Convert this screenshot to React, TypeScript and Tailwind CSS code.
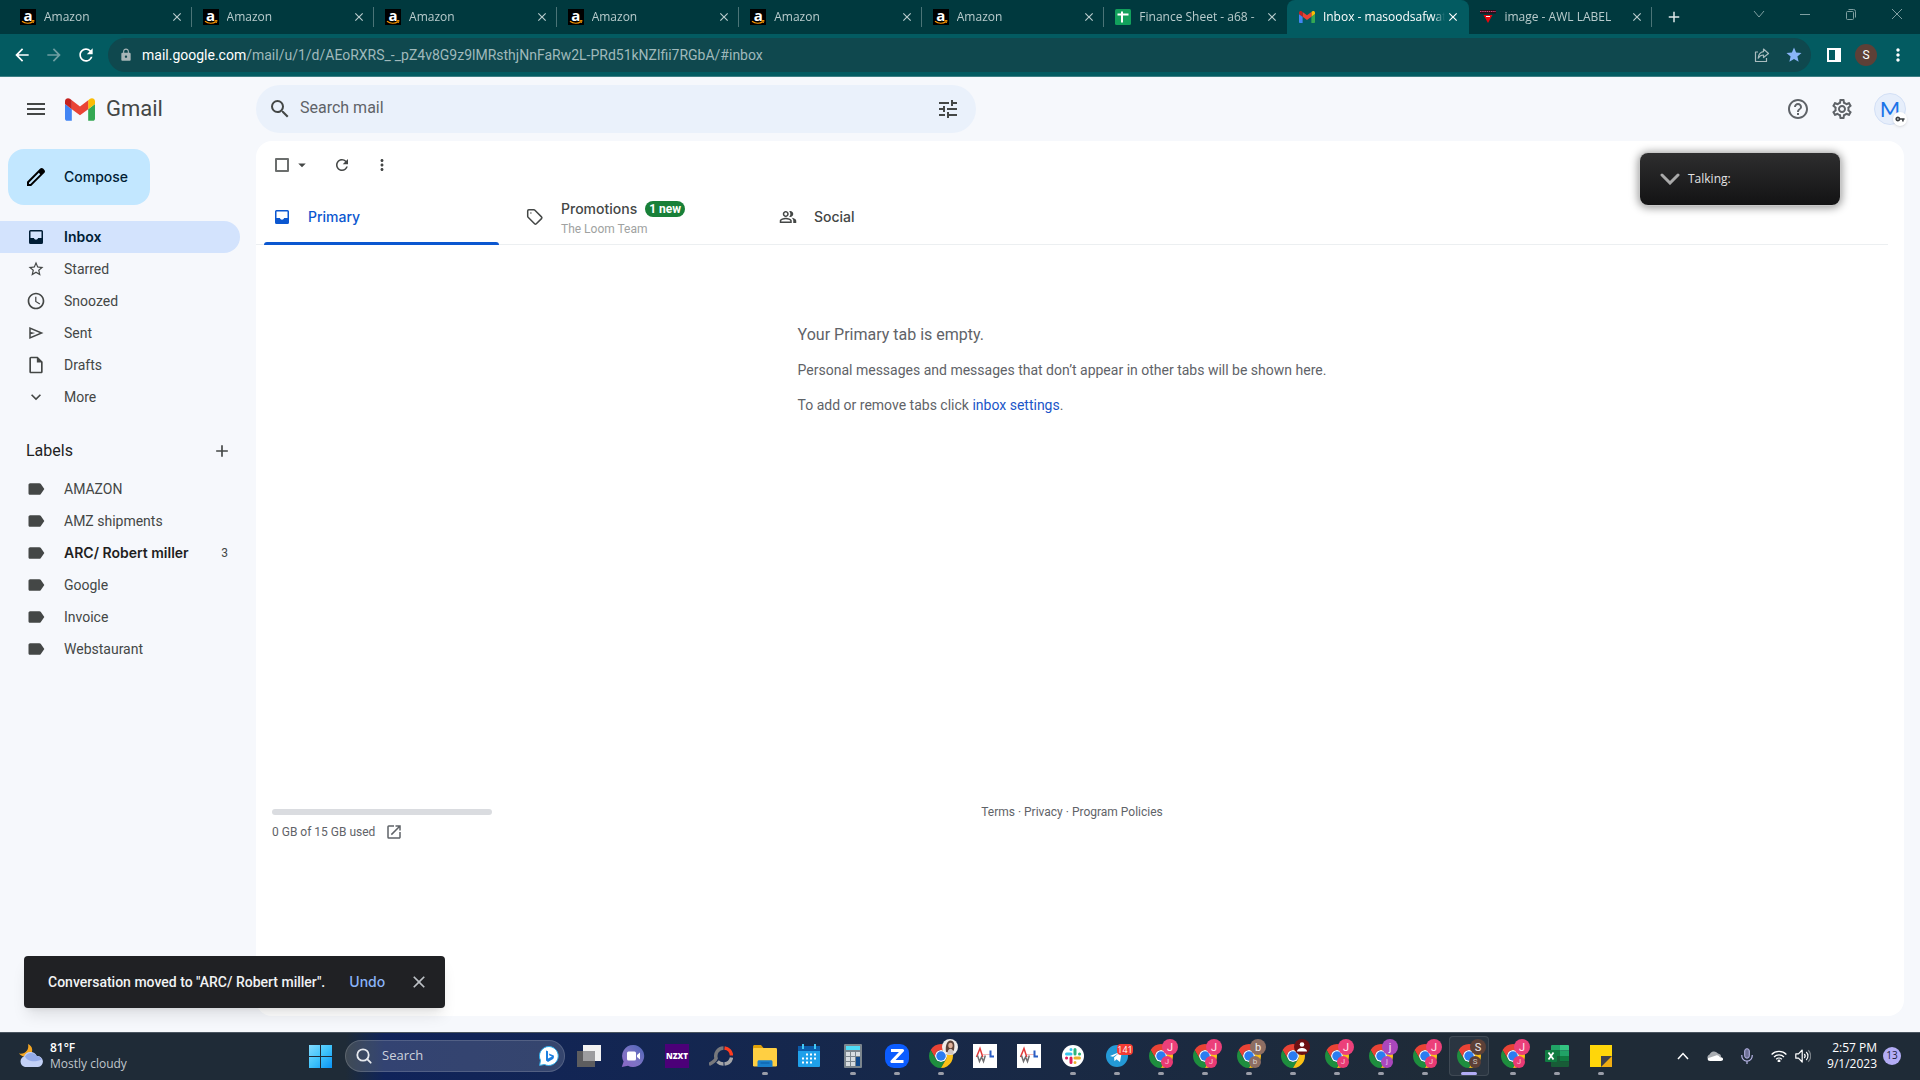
import React from 'react';
import {
  MdAdd,
  MdArrowBack,
  MdArrowDropDown,
  MdArrowForward,
  MdClose,
  MdExpandMore,
  MdHelpOutline,
  MdLabel,
  MdLock,
  MdMenu,
  MdMoreVert,
  MdOpenInNew,
  MdOutlineInsertDriveFile,
  MdOutlinePeopleAlt,
  MdOutlineSettings,
  MdRefresh,
  MdSchedule,
  MdSearch,
  MdStar,
  MdStarBorder,
  MdTune,
  MdVpnKey,
} from 'react-icons/md';

/* ---------- drawings ---------- */

function GmailLogo({ className }: { className?: string }) {
  return (
    <svg viewBox="52 42 88 66" className={className} aria-hidden="true">
      <path fill="#4285f4" d="M58 108h14V74L52 59v43c0 3.32 2.69 6 6 6" />
      <path fill="#34a853" d="M120 108h14c3.32 0 6-2.69 6-6V59l-20 15" />
      <path fill="#fbbc04" d="M120 48v26l20-15v-8c0-7.42-8.47-11.65-14.4-7.2" />
      <path fill="#ea4335" d="M72 74V48l24 18 24-18v26L96 92" />
      <path fill="#c5221f" d="M52 51v8l20 15V48l-5.6-4.2c-5.94-4.45-14.4-.22-14.4 7.2" />
    </svg>
  );
}

function AmazonIcon() {
  return (
    <span className="relative flex h-4 w-4 shrink-0 items-center justify-center bg-black font-['Open_Sans',sans-serif] text-[15px] leading-[10px] font-bold text-white">
      <span className="pb-1">a</span>
      <svg viewBox="0 0 16 16" className="absolute inset-0 h-4 w-4" aria-hidden="true">
        <path d="M2 12.2c3.4 2.5 8 2.500 11 .4" fill="none" stroke="#f79400" strokeWidth="1.300" />
        <path d="M11.500 11.700l2.600-.2-.8 2.400" fill="none" stroke="#f79400" strokeWidth="1" />
      </svg>
    </span>
  );
}

function SheetsIcon() {
  return (
    <svg viewBox="0 0 16 16" className="h-4 w-4 shrink-0" aria-hidden="true">
      <rect width="16" height="16" rx="1.500" fill="#12a05c" />
      <path d="M2.500 5.500h11M7 2.500v11" stroke="#fff" strokeWidth="2" />
    </svg>
  );
}

function AwlIcon() {
  return (
    <svg viewBox="0 0 16 16" className="h-4 w-4 shrink-0" aria-hidden="true">
      <rect x="0" y="1" width="16" height="3.500" fill="#2a0d16" />
      <path d="M0 2.500h16" stroke="#d0477a" strokeWidth="1.200" strokeDasharray="1.500 .7" />
      <path d="M3.500 6h9L8 14z" fill="#e8050c" />
      <path d="M6 7.500h4" stroke="#fff" strokeWidth="1" />
    </svg>
  );
}

function InboxIcon({ className }: { className?: string }) {
  return (
    <svg viewBox="0 0 14 14" className={className} fill="currentColor" aria-hidden="true">
      <path
        fillRule="evenodd"
        d="M1.500 0h11A1.500 1.500 0 0 1 14 1.500v11a1.500 1.500 0 0 1-1.500 1.500h-11A1.500 1.500 0 0 1 0 12.500v-11A1.500 1.500 0 0 1 1.500 0zM1.500 1.500V8h3.400c.4 1.100 1.100 1.700 2.100 1.700S8.700 9.100 9.100 8h3.400V1.500z"
      />
    </svg>
  );
}

function SendIcon() {
  return (
    <svg viewBox="0 0 24 24" className="h-[18px] w-[18px]" fill="currentColor" aria-hidden="true">
      <path d="M3 20V4l19 8-19 8zm2-3l11.850-5L5 7v3.500l6 1.500-6 1.500V17z" />
    </svg>
  );
}

function PencilIcon() {
  return (
    <svg viewBox="0 0 24 24" className="h-6 w-6" fill="currentColor" aria-hidden="true">
      <path d="M20.410 4.940l-1.350-1.350c-.78-.78-2.050-.78-2.830 0L3 16.820V21h4.180L20.410 7.770c.79-.78.79-2.050 0-2.830zm-14 14.120L5 19v-1.360l9.820-9.820 1.410 1.410-9.820 9.830z" />
    </svg>
  );
}

function TagIcon() {
  return (
    <svg viewBox="0 0 18 18" className="h-[18px] w-[18px]" fill="none" stroke="currentColor" strokeWidth="1.500" aria-hidden="true">
      <path d="M1.700 2.900v5.300c0 .4.1.7.4 1l6.500 6.600c.5.500 1.200.5 1.700 0l5.200-5.200c.5-.5.500-1.200 0-1.700L8.900 2.200c-.3-.3-.6-.4-1-.4H2.800c-.6 0-1.100.5-1.100 1.100z" />
      <circle cx="4.900" cy="5" r=".7" fill="currentColor" stroke="none" />
    </svg>
  );
}

function ShareIcon() {
  return (
    <svg viewBox="0 0 16 16" className="h-4 w-4" fill="none" stroke="currentColor" strokeWidth="1.200" strokeLinejoin="round" aria-hidden="true">
      <path d="M4 5H1.500v9.500h11V11" />
      <path d="M9.500 2l5 4.500-5 4V8C7 8 5.500 9 4.200 11.200 4.500 7.500 6.500 5 9.500 4.600z" />
    </svg>
  );
}

function ChromeIcon() {
  return (
    <svg viewBox="0 0 48 48" className="h-6 w-6" aria-hidden="true">
      <circle cx="24" cy="24" r="12" fill="#fff" />
      <path fill="#ea4335" d="M24 12h20.780a24 24 0 0 0-41.560 0L13.610 30A12 12 0 0 1 24 12z" />
      <path fill="#1e8e3e" d="M13.610 30L3.220 12A24 24 0 0 0 24 48l10.390-18a12 12 0 0 1-20.780 0z" />
      <path fill="#fbc116" d="M34.390 30L24 48a24 24 0 0 0 20.780-36H24a12 12 0 0 1 10.390 18z" />
      <circle cx="24" cy="24" r="9.500" fill="#2b7cf0" />
    </svg>
  );
}

function ChromeProfile({ letter, big, small }: { letter: string; big: string; small: string }) {
  return (
    <span className="relative block h-6 w-6 font-['Roboto',sans-serif]">
      <ChromeIcon />
      <span className={`absolute -top-[5px] -right-[5px] flex h-4 w-4 items-center justify-center rounded-full text-[11px] leading-none text-white/90 ${big}`}>
        {letter}
      </span>
      <span className={`absolute right-0 bottom-0 flex h-3 w-3 items-center justify-center rounded-full text-[8px] leading-none text-white/70 ${small}`}>
        {letter}
      </span>
    </span>
  );
}

function TaskViewIcon() {
  return (
    <svg viewBox="0 0 24 24" className="h-6 w-6" aria-hidden="true">
      <rect x="6" y="1" width="18" height="16" fill="#f2f2f2" />
      <rect x="0" y="7" width="18" height="16" fill="#5d5d5f" />
      <rect x="6" y="7" width="12" height="10" fill="#9d9d9f" />
    </svg>
  );
}

function ChatIcon() {
  return (
    <svg viewBox="0 0 24 24" className="h-6 w-6" aria-hidden="true">
      <defs>
        <linearGradient id="chat" x1="1" y1="0" x2="0" y2="1">
          <stop offset="0" stopColor="#4a63b8" />
          <stop offset=".55" stopColor="#7d74c4" />
          <stop offset="1" stopColor="#8b67c6" />
        </linearGradient>
      </defs>
      <path d="M12.500 1A11 11 0 1 1 7 21.700L.8 23l1.800-5.600A11 11 0 0 1 12.500 1z" fill="url(#chat)" />
      <rect x="6" y="7.500" width="9" height="9" rx="1.500" fill="#fff" />
      <path d="M16 11l3-2.500v7L16 13z" fill="#fff" />
    </svg>
  );
}

function NzxtIcon() {
  return (
    <span className="flex h-6 w-6 items-center justify-center bg-[#4c0078] font-['Open_Sans',sans-serif] text-[8px] leading-none font-extrabold text-white">
      NZXT
    </span>
  );
}

function RingIcon() {
  return (
    <svg viewBox="0 0 24 24" className="h-6 w-6" fill="none" aria-hidden="true">
      <path d="M14.500 4a8 8 0 0 0-7.400 10.300Q6 17.500 0 20.500" stroke="#77787c" strokeWidth="3.500" />
      <path d="M8.500 17.500A8 8 0 0 0 14.500 20" stroke="#a4a5a8" strokeWidth="3.500" />
      <path d="M15.500 4A8 8 0 0 1 22.500 11.500" stroke="#ff3c1f" strokeWidth="3.500" />
      <path d="M22.500 13.500A8 8 0 0 1 15.500 20" stroke="#a4a5a8" strokeWidth="3.500" />
    </svg>
  );
}

function FolderIcon() {
  return (
    <svg viewBox="0 0 24 24" className="h-6 w-6" aria-hidden="true">
      <path d="M0 2.500C0 1.700.7 1 1.500 1H8l2.500 3v4H0z" fill="#e0a008" />
      <rect y="4" width="24" height="18.500" rx="1.200" fill="#ffcf42" />
      <path d="M4.500 23v-5.200c0-.8.7-1.500 1.500-1.500h12c.8 0 1.500.7 1.500 1.500V23z" fill="#1a7fcb" />
      <path d="M7.500 19h9" stroke="#0a5ca4" strokeWidth="1" />
    </svg>
  );
}

function CalendarIcon() {
  return (
    <svg viewBox="0 0 24 24" className="h-6 w-6" aria-hidden="true">
      <rect x="1" y="2" width="22" height="21" rx="1" fill="#1fa0ea" />
      <path d="M1 2h22v5H1z" fill="#0b5cab" />
      <path d="M6 0v5M18 0v5" stroke="#43c8f5" strokeWidth="2" />
      <path d="M9 10.500h10M5 14.500h14M5 18.500h10" stroke="#fff" strokeWidth="2" strokeDasharray="2 2" />
    </svg>
  );
}

function CalculatorIcon() {
  return (
    <svg viewBox="0 0 24 24" className="h-6 w-6" aria-hidden="true">
      <rect x="3" width="18" height="24" rx="1" fill="#7b858d" />
      <rect x="5" y="2" width="14" height="4" fill="#4fdcf7" />
      <path d="M5 10h14M5 15h9M5 20h9" stroke="#d8dde1" strokeWidth="4" strokeDasharray="4 1" />
      <rect x="15" y="13" width="4" height="9" fill="#124a8c" />
    </svg>
  );
}

function ZoomAppIcon() {
  return (
    <svg viewBox="0 0 24 24" className="h-6 w-6" aria-hidden="true">
      <rect width="24" height="24" rx="9" fill="#0b5cff" />
      <path d="M6 6.500h11.500L7 17.500h11.500" fill="none" stroke="#fff" strokeWidth="3.200" strokeLinejoin="round" />
    </svg>
  );
}

function ChromePhoto() {
  return (
    <span className="relative block h-6 w-6">
      <ChromeIcon />
      <svg viewBox="0 0 16 16" className="absolute -top-[5px] -right-[5px] h-4 w-4" aria-hidden="true">
        <circle cx="8" cy="8" r="8" fill="#efecea" />
        <path d="M4 13C3 7 5 1.500 8.500 1.500S13 5 12 11l-2 3z" fill="#5c4238" />
        <ellipse cx="8.500" cy="6.500" rx="2.200" ry="2.800" fill="#dfb19a" />
        <path d="M5.500 15.500c0-4 1-5.500 3-5.500s3 1.500 3 5.500z" fill="#cfc6c2" />
      </svg>
    </span>
  );
}

function ChromeGuest() {
  return (
    <span className="relative block h-6 w-6">
      <ChromeIcon />
      <svg viewBox="0 0 16 16" className="absolute -top-[5px] -right-[5px] h-4 w-4" aria-hidden="true">
        <circle cx="8" cy="8" r="8" fill="#6d1013" />
        <circle cx="8" cy="5.500" r="2.300" fill="#fff" />
        <path d="M3 12.500c0-2.200 2.500-3.500 5-3.500s5 1.300 5 3.500z" fill="#fff" />
      </svg>
    </span>
  );
}

function AwlAppIcon() {
  return (
    <svg viewBox="0 0 24 24" className="h-6 w-6" aria-hidden="true">
      <rect width="24" height="24" fill="#fff" />
      <path d="M3.500 13L7 4.500 9.800 13" fill="none" stroke="#e23a3a" strokeWidth="1.500" />
      <path d="M4.500 11.500l2 6 2-4.500 2 4.500 1.800-6" fill="none" stroke="#6e6e70" strokeWidth="1.500" />
      <path d="M10 10.500h7" stroke="#f4b9b9" strokeWidth="1" />
      <path d="M17.500 6.500v6H21" fill="none" stroke="#2b5ec4" strokeWidth="2" />
    </svg>
  );
}

function SlackIcon() {
  return (
    <svg viewBox="0 0 24 24" className="h-6 w-6" aria-hidden="true">
      <circle cx="12" cy="12" r="11" fill="#fff" />
      <g strokeWidth="3" strokeLinecap="round">
        <path d="M5.500 10H10M10 5.500v.1" stroke="#36c5f0" />
        <path d="M14 5.500V10M18.500 10h.1" stroke="#2eb67d" />
        <path d="M14 14h4.500M14 18.500v.1" stroke="#ecb22e" />
        <path d="M10 14v4.500M5.500 14h.1" stroke="#e01e5a" />
      </g>
    </svg>
  );
}

function TelegramIcon() {
  return (
    <span className="relative block h-6 w-6">
      <svg viewBox="0 0 24 24" className="h-6 w-6" aria-hidden="true">
        <circle cx="12" cy="12" r="11" fill="#2499d6" />
        <path d="M5 12l12-5-2 11-3.500-2.800-2 2-.5-3.700 5-4.500-6 3.800z" fill="#fff" />
      </svg>
      <span className="absolute top-0 left-3 flex h-[11px] w-4 items-center justify-center rounded-sm bg-[#f23c34] font-['Open_Sans',sans-serif] text-[9px] leading-none text-white">
        141
      </span>
    </span>
  );
}

function ExcelIcon() {
  return (
    <svg viewBox="0 0 24 24" className="h-6 w-6" aria-hidden="true">
      <path d="M7 1h8.500v5.500H6V2a1 1 0 0 1 1-1z" fill="#21a366" />
      <path d="M15 1h8a1 1 0 0 1 1 1v4.500h-9z" fill="#33c481" />
      <path d="M6 6.500h9V12H6z" fill="#107c41" />
      <path d="M15 6.500h9V12h-9z" fill="#21a366" />
      <path d="M15 12h9v5.500h-9z" fill="#107c41" />
      <path d="M6 12h9v5.500h9V22a1 1 0 0 1-1 1H7a1 1 0 0 1-1-1z" fill="#185c37" />
      <rect y="6" width="12" height="12" rx="1" fill="#107c41" />
      <path d="M3.500 8.500l5 7M8.500 8.500l-5 7" stroke="#fff" strokeWidth="1.800" />
    </svg>
  );
}

function StickyIcon() {
  return (
    <svg viewBox="0 0 24 24" className="h-6 w-6" aria-hidden="true">
      <path d="M1 1h22v22H1z" fill="#ffd60a" />
      <path d="M12 23V12h11v11z" fill="#f0ad12" />
      <path d="M12 23V12h11z" fill="#3f4148" />
    </svg>
  );
}

function WeatherIcon() {
  return (
    <svg viewBox="0 0 24 24" className="h-6 w-6" aria-hidden="true">
      <path d="M9 0c5 2 5.500 8 2 11.500C8 14 3 13 0 9.500 6 10.500 10.500 6 9 0z" fill="#f5a623" />
      <path d="M6 23a5.500 5.500 0 0 1-1-10.500A7 7 0 0 1 17.800 12 5.500 5.500 0 0 1 19 23z" fill="#c3d1f6" />
      <path d="M6 12.500a7 7 0 0 1 11.800-.5c2 .2 4 1.500 5 3.500C15 19 8 17 6 12.500z" fill="#93aae8" />
    </svg>
  );
}

function BingIcon() {
  return (
    <svg viewBox="0 0 20 20" className="h-5 w-5" aria-hidden="true">
      <path d="M10 .5A9.500 9.500 0 1 1 5.500 18.500L.6 19.400l.9-5A9.500 9.500 0 0 1 10 .5z" fill="#fff" stroke="#29a8e6" strokeWidth="1" />
      <path d="M7 4.500l2 .8v7.200l4-2-2.500-1L9.800 7.500l5 1.900c.5 2-.2 3.300-1.600 4.200L9 16l-2-1.500z" fill="#1b7fe0" />
    </svg>
  );
}

/* ---------- browser frame ---------- */

const tabs = [
  { title: 'Amazon', icon: <AmazonIcon /> },
  { title: 'Amazon', icon: <AmazonIcon /> },
  { title: 'Amazon', icon: <AmazonIcon /> },
  { title: 'Amazon', icon: <AmazonIcon /> },
  { title: 'Amazon', icon: <AmazonIcon /> },
  { title: 'Amazon', icon: <AmazonIcon /> },
  { title: 'Finance Sheet - a68 -', icon: <SheetsIcon /> },
  { title: 'Inbox - masoodsafwat', icon: <GmailLogo className="h-4 w-4 shrink-0" />, active: true },
  { title: 'image - AWL LABEL', icon: <AwlIcon /> },
];

function TabStrip() {
  return (
    <div className="flex h-[34px] bg-[#00393e] pl-[9px] text-[#b9cccd]">
      <div className="grid min-w-0 flex-1 grid-cols-9">
        {tabs.map((t, i) => (
          <div
            key={i}
            className={
              t.active
                ? 'flex min-w-0 items-center rounded-t-lg bg-[#035b61] pr-2 pl-3 text-white'
                : 'flex min-w-0 items-center pl-[11px]'
            }
          >
            {t.icon}
            <a
              href="#tab"
              className="ml-2 min-w-0 flex-1 overflow-hidden text-xs whitespace-nowrap [mask-image:linear-gradient(to_right,#000_calc(100%-12px),transparent)]"
            >
              {t.title}
            </a>
            <button aria-label="Close tab" className="flex h-4 w-4 shrink-0 items-center justify-center">
              <MdClose className="h-3.5 w-3.5" />
            </button>
            {!t.active && <span className={i === 6 ? 'ml-1.5 w-px' : 'ml-1.5 h-5 w-px bg-[#4b7477]'} />}
          </div>
        ))}
      </div>
      <div className="flex w-[268px] shrink-0 items-center">
        <button aria-label="New tab" className="ml-3 flex h-5 w-5 items-center justify-center text-[#dfe9ea]">
          <MdAdd className="h-[18px] w-[18px]" />
        </button>
        <div className="ml-auto flex h-7 self-start text-[#7f9fa1]">
          <button aria-label="Search tabs" className="flex w-[46px] items-center justify-center">
            <svg viewBox="0 0 12 12" className="h-3 w-3" fill="none" stroke="currentColor">
              <path d="M1 3l5 6 5-6" />
            </svg>
          </button>
          <button aria-label="Minimize" className="flex w-[46px] items-center justify-center">
            <svg viewBox="0 0 12 12" className="h-3 w-3" fill="none" stroke="currentColor">
              <path d="M1 6.500h10" />
            </svg>
          </button>
          <button aria-label="Restore" className="flex w-[46px] items-center justify-center">
            <svg viewBox="0 0 12 12" className="h-3 w-3" fill="none" stroke="currentColor">
              <rect x="1.500" y="3.500" width="7" height="8" rx="1" />
              <path d="M3.500 1.500h5a2 2 0 0 1 2 2v6" />
            </svg>
          </button>
          <button aria-label="Close window" className="flex w-[46px] items-center justify-center">
            <svg viewBox="0 0 12 12" className="h-3 w-3" fill="none" stroke="currentColor">
              <path d="M1 1l10 10M11 1L1 11" />
            </svg>
          </button>
        </div>
      </div>
    </div>
  );
}

function AddressBar() {
  return (
    <div className="flex h-[43px] items-center border-b border-[#3d7f84] bg-[#035b61] pl-3 text-white">
      <button aria-label="Back" className="mr-3 flex w-5 justify-center">
        <MdArrowBack className="h-5 w-5" />
      </button>
      <button aria-label="Forward" className="mr-3 flex w-5 justify-center text-[#6f9fa2]">
        <MdArrowForward className="h-5 w-5" />
      </button>
      <button aria-label="Reload" className="mr-3 flex w-5 justify-center">
        <MdRefresh className="h-5 w-5" />
      </button>
      <div className="flex h-[34px] min-w-0 flex-1 items-center rounded-full bg-[#0f484e] pr-2 pl-[11px]">
        <MdLock className="h-3.5 w-3.5 text-[#a7b5b7]" />
        <a href="#inbox" className="ml-[9px] flex-1 truncate font-['Roboto',sans-serif] text-sm text-[#9fb9bb]">
          <span className="text-white">mail.google.com</span>
          /mail/u/1/d/AEoRXRS_-_pZ4v8G9z9lMRsthjNnFaRw2L-PRd51kNZlfii7RGbA/#inbox
        </a>
        <button aria-label="Share" className="mr-[15px] text-[#a9bcbe]">
          <ShareIcon />
        </button>
        <button aria-label="Bookmark" className="text-[#8ab4f8]">
          <MdStar className="h-[18px] w-[18px]" />
        </button>
      </div>
      <button aria-label="Side panel" className="ml-4 flex w-[14px]">
        <svg viewBox="0 0 14 14" className="h-3.5 w-3.5" aria-hidden="true">
          <path fill="#fff" fillRule="evenodd" d="M0 0h14v14H0zM2 2v10h6V2z" />
        </svg>
      </button>
      <button className="ml-[14px] flex h-[22px] w-[22px] items-center justify-center rounded-full bg-[#5d4037] font-['Roboto',sans-serif] text-xs">
        S
      </button>
      <button aria-label="Browser menu" className="mr-3 ml-[11px] flex w-5 justify-center">
        <MdMoreVert className="h-5 w-5" />
      </button>
    </div>
  );
}

/* ---------- mail ---------- */

function MailHeader() {
  return (
    <header className="flex h-16 items-center text-[#444746]">
      <div className="flex w-64 shrink-0 items-center pl-6">
        <button aria-label="Main menu">
          <MdMenu className="h-6 w-6" />
        </button>
        <GmailLogo className="ml-[17px] h-[23px] w-[30px]" />
        <span className="ml-[11px] text-[22px] leading-6">Gmail</span>
      </div>
      <div className="flex h-12 w-[720px] shrink items-center rounded-full bg-[#eaf1fb] pr-4 pl-3">
        <MdSearch className="h-6 w-6" />
        <input
          aria-label="Search mail"
          placeholder="Search mail"
          className="ml-2 min-w-0 flex-1 bg-transparent pb-0.5 text-base outline-none placeholder:text-[#5f6368]"
        />
        <button aria-label="Show search options">
          <MdTune className="h-6 w-6" />
        </button>
      </div>
      <div className="ml-auto flex items-center gap-5 pr-[14px] text-[#5f6368]">
        <button aria-label="Support">
          <MdHelpOutline className="h-6 w-6" />
        </button>
        <button aria-label="Settings">
          <MdOutlineSettings className="h-6 w-6" />
        </button>
        <button className="relative flex h-8 w-8 items-center justify-center rounded-full border border-[#d3e0f6] bg-[#e6eefb] font-['Lato',sans-serif] text-[22px] leading-none text-[#1a73e8]">
          M
          <span className="absolute -right-0.5 -bottom-0.5 flex h-3.5 w-3.5 items-center justify-center rounded-full bg-white shadow">
            <MdVpnKey className="h-2.5 w-2.5 text-[#3c4043]" />
          </span>
        </button>
      </div>
    </header>
  );
}

const folders = [
  { name: 'Starred', icon: <MdStarBorder className="h-[18px] w-[18px]" /> },
  { name: 'Snoozed', icon: <MdSchedule className="h-5 w-5" /> },
  { name: 'Sent', icon: <SendIcon /> },
  { name: 'Drafts', icon: <MdOutlineInsertDriveFile className="h-5 w-5" /> },
  { name: 'More', icon: <MdExpandMore className="h-5 w-5" /> },
];

const labels = ['AMAZON', 'AMZ shipments', 'ARC/ Robert miller', 'Google', 'Invoice', 'Webstaurant'];

function Sidebar() {
  return (
    <nav className="w-64 shrink-0 pt-2 text-sm text-[#444746]">
      <button className="ml-2 flex h-14 items-center rounded-2xl bg-[#c2e7ff] pr-[22px] pl-4 font-['Inter',sans-serif] font-medium text-[#001d35]">
        <span className="mr-4 text-black">
          <PencilIcon />
        </span>
        Compose
      </button>
      <a
        href="#inbox"
        className="mt-4 mr-4 flex h-8 items-center rounded-r-full bg-[#d3e3fd] font-['Inter',sans-serif] font-semibold text-[#001d35]"
      >
        <span className="mr-4 ml-6 flex w-6 justify-center">
          <InboxIcon className="h-3.5 w-3.5" />
        </span>
        Inbox
      </a>
      {folders.map((f) => (
        <a key={f.name} href={`#${f.name}`} className="flex h-8 items-center">
          <span className="mr-4 ml-6 flex w-6 justify-center">{f.icon}</span>
          {f.name}
        </a>
      ))}
      <div className="mt-[22px] mb-[6px] flex h-8 items-center justify-between pr-6 pl-[26px]">
        <h2 className="text-base text-[#1f1f1f]">Labels</h2>
        <button aria-label="Create new label">
          <MdAdd className="h-5 w-5" />
        </button>
      </div>
      {labels.map((l) => (
        <a key={l} href={`#${l}`} className="flex h-8 items-center pr-7">
          <span className="mr-4 ml-6 flex w-6 justify-center">
            <MdLabel className="h-5 w-5" />
          </span>
          {l.startsWith('ARC') ? (
            <>
              <span className="flex-1 font-['Inter',sans-serif] font-semibold text-[#1f1f1f]">{l}</span>
              <span className="text-xs">3</span>
            </>
          ) : (
            l
          )}
        </a>
      ))}
    </nav>
  );
}

function MailPanel() {
  return (
    <main className="mr-4 mb-4 flex min-w-0 flex-1 flex-col rounded-2xl bg-white text-[#444746]">
      <div className="flex h-12 items-center pl-[19px]">
        <input type="checkbox" aria-label="Select" className="h-3.5 w-3.5 appearance-none rounded-[1px] border-2 border-[#6b6e6d]" />
        <button aria-label="Select options" className="ml-1">
          <MdArrowDropDown className="h-[18px] w-[18px]" />
        </button>
        <button aria-label="Refresh" className="ml-[22px]">
          <MdRefresh className="h-[18px] w-[18px]" />
        </button>
        <button aria-label="More" className="ml-[22px]">
          <MdMoreVert className="h-[18px] w-[18px]" />
        </button>
      </div>
      <div role="tablist" className="mr-4 flex h-14 border-b border-[#eceff1] font-['Inter',sans-serif] text-sm font-medium">
        <button role="tab" aria-selected="true" className="relative flex w-[253px] items-center pl-[19px] text-[#0b57d0]">
          <InboxIcon className="h-3.5 w-3.5" />
          <span className="ml-[19px]">Primary</span>
          <span className="absolute right-[10px] -bottom-px left-2 h-[3px] rounded-t-sm bg-[#0b57d0]" />
        </button>
        <button role="tab" aria-selected="false" className="flex w-[253px] items-center pl-[17px] text-left">
          <TagIcon />
          <span className="ml-[17px] flex flex-col pt-1">
            <span className="flex h-5 items-center gap-2">
              Promotions
              <span className="flex h-4 items-center rounded-full bg-[#188038] px-1 font-['Roboto',sans-serif] text-xs font-bold text-white">1 new</span>
            </span>
            <span className="font-['Roboto',sans-serif] text-xs leading-5 font-normal text-[#a0a2a1]">The Loom Team</span>
          </span>
        </button>
        <button role="tab" aria-selected="false" className="flex w-[253px] items-center pl-[17px]">
          <MdOutlinePeopleAlt className="h-[18px] w-[18px]" />
          <span className="ml-[17px]">Social</span>
        </button>
      </div>
      <section className="mx-auto pt-20 pr-9 text-sm text-[#5f6368]">
        <p className="text-base leading-5">Your Primary tab is empty.</p>
        <p className="mt-[15px] leading-5">Personal messages and messages that don’t appear in other tabs will be shown here.</p>
        <p className="mt-[15px] leading-5">
          To add or remove tabs click{' '}
          <a href="#settings" className="text-[#1a55c8]">
            inbox settings
          </a>
          .
        </p>
      </section>
      <footer className="mt-auto mb-[175px] grid grid-cols-3 px-4 pr-8 text-xs text-[#5f6368]">
        <div>
          <div className="mt-2 h-1.5 w-[220px] rounded-full bg-[#dadce0]" />
          <div className="mt-2 flex items-center">
            0 GB of 15 GB used
            <a href="#storage" aria-label="Manage storage" className="ml-2.5">
              <MdOpenInNew className="h-[18px] w-[18px]" />
            </a>
          </div>
        </div>
        <p className="pt-[3px] text-center">
          <a href="#terms">Terms</a> · <a href="#privacy">Privacy</a> · <a href="#policies">Program Policies</a>
        </p>
      </footer>
    </main>
  );
}

function Snackbar() {
  return (
    <div role="status" className="absolute bottom-6 left-6 flex h-[52px] items-center rounded bg-[#202124] pl-6 text-sm font-medium text-[#f1f3f4] shadow-lg">
      Conversation moved to "ARC/ Robert miller".
      <button className="ml-6 font-['Inter',sans-serif] text-[#8ab4f8]">Undo</button>
      <button aria-label="Dismiss" className="mr-4 ml-6 text-[#bdc1c6]">
        <MdClose className="h-5 w-5" />
      </button>
    </div>
  );
}

function TalkingOverlay() {
  return (
    <div className="absolute top-[76px] right-20 flex h-[52px] w-[200px] items-center rounded-lg bg-linear-to-b from-[#2e2e2f] to-[#131314] pl-5 font-['Open_Sans','Noto_Sans',sans-serif] text-xs text-[#e2e2e2] shadow-[0_1px_8px_2px_rgba(0,0,0,0.4)] ring-1 ring-[#c8c8c8]">
      <svg viewBox="0 0 20 12" className="mr-2 h-3 w-5" fill="none" stroke="#a9a9a9" strokeWidth="3" strokeLinecap="round" aria-hidden="true">
        <path d="M2 2l8 8 8-8" />
      </svg>
      Talking:
    </div>
  );
}

/* ---------- taskbar ---------- */

type TaskbarApp = { name: string; icon: React.ReactNode; open?: boolean; active?: boolean };

const pink = { big: 'bg-[#ec407a]', small: 'bg-[#e93a74]' };

const apps: TaskbarApp[] = [
  { name: 'Task view', icon: <TaskViewIcon /> },
  { name: 'Chat', icon: <ChatIcon /> },
  { name: 'NZXT', icon: <NzxtIcon /> },
  { name: 'Monitor', icon: <RingIcon /> },
  { name: 'File Explorer', icon: <FolderIcon />, open: true },
  { name: 'Calendar', icon: <CalendarIcon /> },
  { name: 'Calculator', icon: <CalculatorIcon />, open: true },
  { name: 'Zoom', icon: <ZoomAppIcon />, open: true },
  { name: 'Chrome 1', icon: <ChromePhoto />, open: true },
  { name: 'AWL 1', icon: <AwlAppIcon /> },
  { name: 'AWL 2', icon: <AwlAppIcon /> },
  { name: 'Slack', icon: <SlackIcon />, open: true },
  { name: 'Telegram', icon: <TelegramIcon />, open: true },
  { name: 'Chrome 2', icon: <ChromeProfile letter="J" {...pink} />, open: true },
  { name: 'Chrome 3', icon: <ChromeProfile letter="J" {...pink} />, open: true },
  { name: 'Chrome 4', icon: <ChromeProfile letter="b" big="bg-[#8d6e63]" small="bg-[#8d6e63]" />, open: true },
  { name: 'Chrome 5', icon: <ChromeGuest />, open: true },
  { name: 'Chrome 6', icon: <ChromeProfile letter="J" {...pink} />, open: true },
  { name: 'Chrome 7', icon: <ChromeProfile letter="j" big="bg-[#ab47bc]" small="bg-[#ab47bc]" />, open: true },
  { name: 'Chrome 8', icon: <ChromeProfile letter="J" {...pink} />, open: true },
  { name: 'Chrome 9', icon: <ChromeProfile letter="S" big="bg-[#5d4037]" small="bg-[#5d4037]" />, open: true, active: true },
  { name: 'Chrome 10', icon: <ChromeProfile letter="J" {...pink} />, open: true },
  { name: 'Excel', icon: <ExcelIcon />, open: true },
  { name: 'Sticky Notes', icon: <StickyIcon />, open: true },
];

function Taskbar() {
  return (
    <div className="flex h-12 items-center border-t border-[#4a5560] bg-linear-to-r from-[#1f2b37] from-18% via-[#10235a] via-20% to-[#1f2b37] to-76% pb-px font-['Open_Sans','Noto_Sans',sans-serif] text-xs text-white">
      <div className="flex w-[298px] shrink-0 items-center pl-[19px] leading-4">
        <WeatherIcon />
        <p className="ml-[7px]">
          <span className="block font-semibold">81°F</span>
          <span className="block text-[#c0c6cc]">Mostly cloudy</span>
        </p>
      </div>
      <button aria-label="Start" className="flex w-11 shrink-0 justify-center">
        <svg viewBox="0 0 23 23" className="h-[23px] w-[23px]" aria-hidden="true">
          <defs>
            <linearGradient id="win" x1="0" y1="0" x2="1" y2="1">
              <stop offset="0" stopColor="#83dbff" />
              <stop offset=".5" stopColor="#3fc3fb" />
              <stop offset="1" stopColor="#0a93f5" />
            </linearGradient>
          </defs>
          <path fill="url(#win)" d="M0 0h11v11H0zM12 0h11v11H12zM0 12h11v11H0zM12 12h11v11H12z" />
        </svg>
      </button>
      <div className="ml-[3px] flex h-8 w-[220px] shrink-0 items-center rounded-full border border-white/15 bg-white/15 pr-[5px] pl-[10px]">
        <svg viewBox="0 0 16 16" className="h-4 w-4 shrink-0" fill="none" stroke="#e6e9ee" strokeWidth="1.800" strokeLinecap="round" aria-hidden="true">
          <circle cx="7" cy="7" r="5.700" />
          <path d="M11.200 11.200l3.500 3.500" />
        </svg>
        <input aria-label="Search" placeholder="Search" className="ml-[10px] min-w-0 flex-1 bg-transparent text-[13px] outline-none placeholder:text-[#cdd2dc]" />
        <BingIcon />
      </div>
      <div className="ml-0.5 flex min-w-0">
        {apps.map((a) => (
          <button
            key={a.name}
            aria-label={a.name}
            className="relative flex h-11 w-11 shrink-0 items-center justify-center"
          >
            {a.active && <span className="absolute inset-x-0.5 inset-y-0.5 rounded border border-white/10 bg-white/5" />}
            <span className="relative">{a.icon}</span>
            {a.open && (
              <span
                className={
                  a.active
                    ? 'absolute bottom-[3px] h-[3px] w-4 rounded-full bg-[#b3acf5]'
                    : 'absolute bottom-[3px] h-[3px] w-1.5 rounded-full bg-[#9a9da8]'
                }
              />
            )}
          </button>
        ))}
      </div>
      <div className="ml-auto flex shrink-0 items-center pr-[19px]">
        <button aria-label="Hidden icons" className="w-8">
          <svg viewBox="0 0 12 12" className="mx-auto h-3 w-3" fill="none" stroke="#fff" strokeWidth="1.500">
            <path d="M1 9l5-5.500L11 9" />
          </svg>
        </button>
        <button aria-label="OneDrive" className="w-8">
          <svg viewBox="0 0 16 10" className="mx-auto h-[10px] w-4">
            <path d="M2 9a3 3 0 0 1 .5-5.500A5 5 0 0 1 11 2.500 3.500 3.500 0 0 1 14 6z" fill="#a9adb2" />
            <path d="M3 10C0 10 0 6.500 3 6.500L9 4.500c2-.5 3 .5 3.500 1.500C17 6 17 10 14 10z" fill="#fff" />
          </svg>
        </button>
        <button aria-label="Microphone" className="w-8">
          <svg viewBox="0 0 12 16" className="mx-auto h-4 w-3" fill="none" stroke="#b9b7e8">
            <rect x="3.700" y=".7" width="4.600" height="9.500" rx="2.300" fill="#6d7096" />
            <path d="M.8 7v1a5.200 5.200 0 0 0 10.400 0V7M6 13.200V16" strokeWidth="1.200" />
          </svg>
        </button>
        <button aria-label="Network and volume" className="ml-2 flex items-center gap-2">
          <svg viewBox="0 0 16 12" className="h-3 w-4" fill="none" stroke="#fff" strokeWidth="1.300">
            <path d="M.6 4.500a10.500 10.500 0 0 1 14.800 0M3 7a7 7 0 0 1 10 0M5.200 9.200a4 4 0 0 1 5.600 0" />
            <circle cx="8" cy="11" r=".8" fill="#fff" />
          </svg>
          <svg viewBox="0 0 16 14" className="h-3.5 w-4" fill="none" stroke="#fff" strokeWidth="1.200">
            <path d="M.8 4.800v4.400h2.700L7.200 13V1L3.500 4.800z" strokeLinejoin="round" />
            <path d="M9.300 5a3 3 0 0 1 0 4M11.200 3a5.500 5.500 0 0 1 0 8" />
            <path d="M13.200 1.200a8 8 0 0 1 0 11.600" opacity=".4" />
          </svg>
        </button>
        <button className="ml-4 text-right leading-4">
          <span className="block">2:57 PM</span>
          <span className="block">9/1/2023</span>
        </button>
        <span className="ml-1.5 flex h-[18px] w-[18px] items-center justify-center rounded-full bg-[#b3acf5] text-[10px] text-[#1b1b3a]">13</span>
      </div>
    </div>
  );
}

export default function App() {
  return (
    <div className="flex min-h-screen flex-col bg-[#f6f8fc] font-['Roboto','Inter',sans-serif]">
      <div className="font-['Open_Sans','Noto_Sans',sans-serif]">
        <TabStrip />
        <AddressBar />
      </div>
      <div className="relative flex flex-1 flex-col">
        <MailHeader />
        <div className="flex flex-1">
          <Sidebar />
          <MailPanel />
        </div>
        <Snackbar />
        <TalkingOverlay />
      </div>
      <Taskbar />
    </div>
  );
}
